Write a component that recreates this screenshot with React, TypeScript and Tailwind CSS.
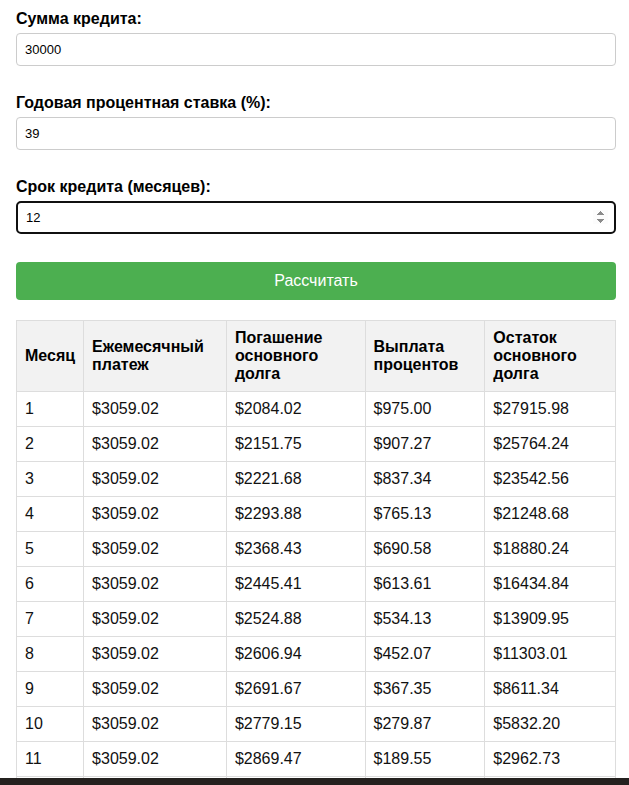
import { useState } from 'react';

const rows = [
  ['1', '$3059.02', '$2084.02', '$975.00', '$27915.98'],
  ['2', '$3059.02', '$2151.75', '$907.27', '$25764.24'],
  ['3', '$3059.02', '$2221.68', '$837.34', '$23542.56'],
  ['4', '$3059.02', '$2293.88', '$765.13', '$21248.68'],
  ['5', '$3059.02', '$2368.43', '$690.58', '$18880.24'],
  ['6', '$3059.02', '$2445.41', '$613.61', '$16434.84'],
  ['7', '$3059.02', '$2524.88', '$534.13', '$13909.95'],
  ['8', '$3059.02', '$2606.94', '$452.07', '$11303.01'],
  ['9', '$3059.02', '$2691.67', '$367.35', '$8611.34'],
  ['10', '$3059.02', '$2779.15', '$279.87', '$5832.20'],
  ['11', '$3059.02', '$2869.47', '$189.55', '$2962.73'],
  ['12', '$3059.02', '$2962.73', '$96.29', '$0.00'],
];

const headers = [
  { text: 'Месяц', w: 'w-[67px]' },
  { text: 'Ежемесячный платеж', w: 'w-[143px]' },
  { text: 'Погашение основного долга', w: 'w-[139px]' },
  { text: 'Выплата процентов', w: 'w-[120px]' },
  { text: 'Остаток основного долга', w: 'w-[131px]' },
];

export default function App() {
  const [amount, setAmount] = useState('30000');
  const [rate, setRate] = useState('39');
  const [term, setTerm] = useState('12');

  return (
    <div className="min-h-screen bg-white font-['Liberation_Sans',Arial,sans-serif] text-black">
      <div className="w-[600px] ml-4 pt-[10px] pb-10">
        {/* Form */}
        <div className="mb-[28px]">
          <label className="block text-base font-bold leading-[18px] mb-[5px]">Сумма кредита:</label>
          <input
            type="number"
            value={amount}
            onChange={(e) => setAmount(e.target.value)}
            className="block w-full h-[33px] px-2 text-[13px] border border-[#ccc] rounded outline-none"
          />
        </div>
        <div className="mb-[28px]">
          <label className="block text-base font-bold leading-[18px] mb-[5px]">Годовая процентная ставка (%):</label>
          <input
            type="number"
            value={rate}
            onChange={(e) => setRate(e.target.value)}
            className="block w-full h-[33px] px-2 text-[13px] border border-[#ccc] rounded outline-none"
          />
        </div>
        <div className="mb-[28px]">
          <label className="block text-base font-bold leading-[18px] mb-[5px]">Срок кредита (месяцев):</label>
          <input
            type="number"
            autoFocus
            value={term}
            onChange={(e) => setTerm(e.target.value)}
            className="block w-full h-[33px] pl-[8px] pr-[6px] text-[13px] border-2 border-[#101010] rounded-[5px] outline-none"
          />
        </div>
        <button className="block w-full h-[38px] bg-[#4caf50] text-white text-base rounded">
          Рассчитать
        </button>

        {/* Schedule */}
        <table className="mt-[20px] w-full border-collapse text-base leading-[18px]">
          <thead>
            <tr className="bg-[#f2f2f2]">
              {headers.map((h) => (
                <th key={h.text} className={`${h.w} border border-[#ddd] p-2 text-left font-bold align-middle`}>
                  {h.text}
                </th>
              ))}
            </tr>
          </thead>
          <tbody>
            {rows.map((r) => (
              <tr key={r[0]}>
                {r.map((c, i) => (
                  <td key={i} className="border border-[#ddd] p-2 h-[35px] text-[#111]">
                    {c}
                  </td>
                ))}
              </tr>
            ))}
          </tbody>
        </table>
      </div>

      {/* dark strip along the bottom edge */}
      <div className="fixed left-0 right-0 bottom-0 h-[7px] bg-[#24211f]" />
    </div>
  );
}
